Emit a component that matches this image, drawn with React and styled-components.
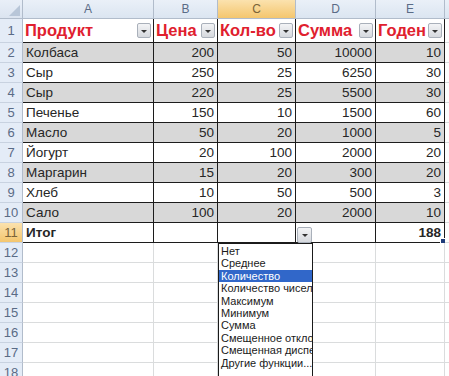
import React from 'react';
import styled, { createGlobalStyle, css } from 'styled-components';

const Global = createGlobalStyle`
  html, body {
    margin: 0;
    padding: 0;
    background: #ffffff;
    overflow: hidden;
  }
  body {
    font-family: "Liberation Sans", Arial, sans-serif;
  }
`;

const Sheet = styled.div`
  position: relative;
  width: 449px;
  height: 376px;
  overflow: hidden;
  display: grid;
  grid-template-columns: 23px 131px 64px 78px 80px 69px 1fr;
  grid-template-rows: 19px 24px repeat(17, 20px);
`;

const Corner = styled.div`
  background: linear-gradient(#e9eff8, #dbe4f0);
  border-right: 1px solid #b1bccb;
  border-bottom: 1px solid #b1bccb;
  box-sizing: border-box;
  position: relative;
  &::after {
    content: '';
    position: absolute;
    right: 2px;
    bottom: 2px;
    border-left: 11px solid transparent;
    border-bottom: 11px solid #b8c6d8;
  }
`;

const ColHead = styled.div`
  box-sizing: border-box;
  display: flex;
  align-items: center;
  justify-content: center;
  font-size: 12px;
  color: #5a6b86;
  border-right: 1px solid #b1bccb;
  border-bottom: 1px solid #b1bccb;
  background: ${(p) =>
    p.$active
      ? 'linear-gradient(#fbe2ae, #f4c66e)'
      : 'linear-gradient(#eaf0f8, #dbe5f1)'};
  ${(p) => p.$active && css`color: #7a6438;`}
`;

const RowHead = styled.div`
  box-sizing: border-box;
  display: flex;
  align-items: center;
  justify-content: center;
  font-size: 13px;
  color: #5a6b86;
  border-right: 1px solid #b1bccb;
  border-bottom: 1px solid #c8d2e0;
  background: ${(p) =>
    p.$active ? 'linear-gradient(#fbe2ae, #f4c66e)' : '#e4ecf7'};
  ${(p) => p.$active && css`color: #7a6438;`}
`;

const Cell = styled.div`
  box-sizing: border-box;
  position: relative;
  display: flex;
  align-items: center;
  justify-content: ${(p) => (p.$right ? 'flex-end' : 'flex-start')};
  padding: 0 3px;
  font-size: 13.5px;
  color: #262626;
  font-weight: ${(p) => (p.$bold ? 700 : 400)};
  white-space: nowrap;
  background: ${(p) => (p.$shade ? '#d8d8d8' : '#ffffff')};
  border-right: 1px solid ${(p) => (p.$table ? '#1c1c1c' : '#dadcdd')};
  border-bottom: 1px solid ${(p) => (p.$table ? '#1c1c1c' : '#dadcdd')};
`;

const HeadCell = styled(Cell)`
  justify-content: space-between;
  padding: 0 2px;
  font-size: 16.5px;
  font-weight: 700;
  color: #e0202e;
`;

const FilterBtn = styled.span`
  width: 14px;
  height: 15px;
  box-sizing: border-box;
  border: 1px solid #a9b0ba;
  border-radius: 2px;
  background: linear-gradient(#f3f4f6, #d6d9de);
  display: flex;
  align-items: center;
  justify-content: center;
  flex-shrink: 0;
  &::after {
    content: '';
    border-left: 3px solid transparent;
    border-right: 3px solid transparent;
    border-top: 3px solid #333;
    margin-top: 1px;
  }
`;

const FillHandle = styled.span`
  position: absolute;
  right: -2px;
  bottom: -2px;
  width: 4px;
  height: 4px;
  background: #1f3c7a;
  border: 1px solid #fff;
`;

const ListArrow = styled(FilterBtn)`
  position: absolute;
  left: 297px;
  top: 227px;
  width: 15px;
  height: 16px;
`;

const List = styled.ul`
  position: absolute;
  left: 218px;
  top: 243px;
  width: 95px;
  height: 140px;
  box-sizing: border-box;
  margin: 0;
  padding: 1px 0 0;
  list-style: none;
  background: #fff;
  border: 1px solid #1a1a1a;
  overflow: hidden;
`;

const Item = styled.li`
  height: 12.4px;
  line-height: 12.4px;
  padding-left: 2px;
  font-size: 11px;
  white-space: nowrap;
  overflow: hidden;
  color: ${(p) => (p.$selected ? '#ffffff' : '#1a1a1a')};
  background: ${(p) => (p.$selected ? '#3167c9' : 'transparent')};
`;

const headers = ['Продукт', 'Цена', 'Кол-во', 'Сумма', 'Годен'];

const rows = [
  ['Колбаса', 200, 50, 10000, 10],
  ['Сыр', 250, 25, 6250, 30],
  ['Сыр', 220, 25, 5500, 30],
  ['Печенье', 150, 10, 1500, 60],
  ['Масло', 50, 20, 1000, 5],
  ['Йогурт', 20, 100, 2000, 20],
  ['Маргарин', 15, 20, 300, 20],
  ['Хлеб', 10, 50, 500, 3],
  ['Сало', 100, 20, 2000, 10],
];

const options = [
  'Нет',
  'Среднее',
  'Количество',
  'Количество чисел',
  'Максимум',
  'Минимум',
  'Сумма',
  'Смещенное отклонение',
  'Смещенная дисперсия',
  'Другие функции...',
];

export default function App() {
  return (
    <>
      <Global />
      <Sheet>
        <Corner />
        {['A', 'B', 'C', 'D', 'E', ''].map((l) => (
          <ColHead key={l || 'x'} $active={l === 'C'}>
            {l}
          </ColHead>
        ))}

        <RowHead>1</RowHead>
        {headers.map((h) => (
          <HeadCell key={h} $table>
            {h}
            <FilterBtn />
          </HeadCell>
        ))}
        <Cell />

        {rows.map((r, i) => (
          <React.Fragment key={i}>
            <RowHead>{i + 2}</RowHead>
            {r.map((v, j) => (
              <Cell key={j} $table $shade={i % 2 === 0} $right={j > 0}>
                {v}
              </Cell>
            ))}
            <Cell />
          </React.Fragment>
        ))}

        <RowHead $active>11</RowHead>
        <Cell $table $bold>Итог</Cell>
        <Cell $table />
        <Cell $table />
        <Cell $table />
        <Cell $table $right $bold>
          188
          <FillHandle />
        </Cell>
        <Cell />

        {[12, 13, 14, 15, 16, 17, 18].map((n) => (
          <React.Fragment key={n}>
            <RowHead>{n}</RowHead>
            {[0, 1, 2, 3, 4, 5].map((c) => (
              <Cell key={c} />
            ))}
          </React.Fragment>
        ))}

        <ListArrow />
        <List>
          {options.map((o) => (
            <Item key={o} $selected={o === 'Количество'}>
              {o}
            </Item>
          ))}
        </List>
      </Sheet>
    </>
  );
}
